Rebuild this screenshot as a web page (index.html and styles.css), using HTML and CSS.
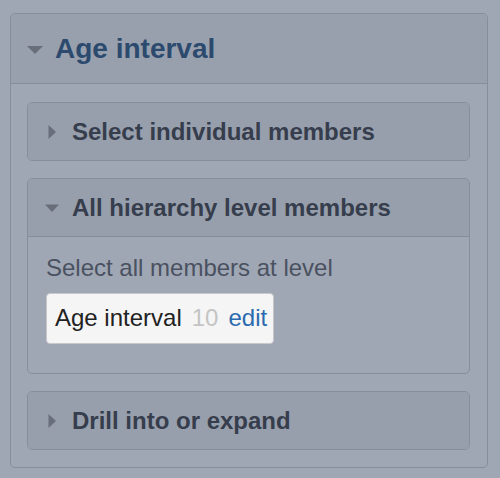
FILE: index.html
```html
<!DOCTYPE html>
<html>
<head>
<meta charset="utf-8">
<link rel="stylesheet" href="styles.css">
</head>
<body>
<div class="panel">
  <div class="panel-head">
    <svg class="caret-lg" width="16" height="8" viewBox="0 0 16 8"><path d="M0 0H16L8 8Z"/></svg>
    <span class="panel-title">Age interval</span>
  </div>
  <div class="panel-body">
    <div class="box">
      <div class="box-head">
        <svg class="caret" width="14" height="14" viewBox="0 0 14 14"><path d="M3.5 0L11 7L3.5 14Z"/></svg>
        <span class="box-title">Select individual members</span>
      </div>
    </div>
    <div class="box">
      <div class="box-head open">
        <svg class="caret" width="14" height="8" viewBox="0 0 14 8"><path d="M0 0.5H14L7 8Z"/></svg>
        <span class="box-title">All hierarchy level members</span>
      </div>
      <div class="box-body">
        <div class="hint">Select all members at level</div>
        <div class="chip">
          <span class="chip-name">Age interval</span>
          <span class="chip-count">10</span>
          <span class="chip-edit">edit</span>
        </div>
      </div>
    </div>
    <div class="box">
      <div class="box-head">
        <svg class="caret" width="14" height="14" viewBox="0 0 14 14"><path d="M3.5 0L11 7L3.5 14Z"/></svg>
        <span class="box-title">Drill into or expand</span>
      </div>
    </div>
  </div>
</div>
</body>
</html>
```
FILE: styles.css
```css
html, body {
  margin: 0;
  padding: 0;
}
body {
  background: #a0a7b4;
  font-family: "Liberation Sans", Arial, sans-serif;
  width: 500px;
  height: 478px;
  overflow: hidden;
}
.panel {
  margin: 13px 12px 0 10px;
  border: 1px solid #878e9b;
  border-radius: 5px;
  background: #a0a7b4;
}
.panel-head {
  display: flex;
  align-items: center;
  gap: 12px;
  height: 69px;
  padding-left: 16px;
  background: #99a0ad;
  border-bottom: 1px solid #878e9b;
  border-radius: 5px 5px 0 0;
}
.caret-lg {
  fill: #686e7a;
  margin-top: 2px;
}
.panel-title {
  font-size: 28px;
  font-weight: bold;
  color: #2c4a6e;
  line-height: 32px;
}
.panel-body {
  display: flex;
  flex-direction: column;
  gap: 17px;
  padding: 18px 17px 17px 16px;
}
.box {
  border: 1px solid #878e9b;
  border-radius: 5px;
  background: #a0a7b4;
  overflow: hidden;
}
.box-head {
  display: flex;
  align-items: center;
  gap: 13px;
  height: 57px;
  padding-left: 17px;
  background: #989fac;
}
.box-head.open {
  border-bottom: 1px solid #878e9b;
}
.caret {
  fill: #686e7a;
}
.box-title {
  font-size: 24px;
  font-weight: bold;
  color: #363d4c;
  line-height: 28px;
}
.box-body {
  display: flex;
  flex-direction: column;
  align-items: flex-start;
  gap: 11px;
  padding: 17px 17px 29px 18px;
}
.hint {
  font-size: 24px;
  line-height: 28px;
  color: #4a5161;
}
.chip {
  display: flex;
  align-items: center;
  gap: 10px;
  padding: 10px 6px 11px 8px;
  background: #f5f5f5;
  border: 1px solid #c6c8cc;
  border-radius: 4px;
  font-size: 24px;
  line-height: 28px;
}
.chip-name {
  color: #222222;
}
.chip-count {
  color: #c4c4c4;
}
.chip-edit {
  color: #2a6aaf;
}
```
